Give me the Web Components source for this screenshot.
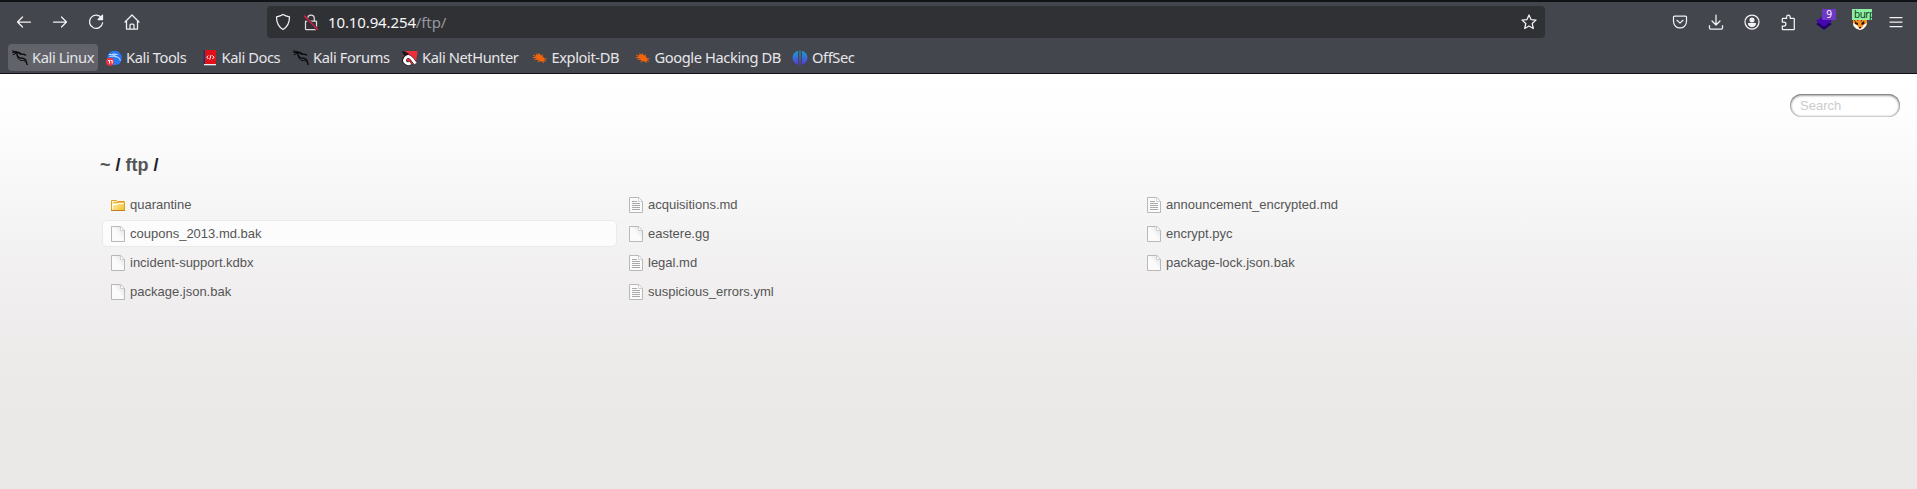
<!DOCTYPE html>
<html lang="en"><head><meta charset="utf-8"><title>listing directory /ftp/</title>
<style>html,body{margin:0;height:100%;overflow:hidden}</style></head><body>
<browser-window></browser-window>
<script>
const svg=(w,h,vb,b,extra='')=>`<svg width="${w}" height="${h}" viewBox="${vb}" fill="none" ${extra}>${b}</svg>`;
const line='stroke="#f2f2f4" stroke-width="1.25" stroke-linecap="round" stroke-linejoin="round"';
const dragon='<g stroke="#08090b" stroke-linejoin="round"><path stroke-width="1" d="M0 .8l4.500 1M.3 2.600l4.500-.5M.8 4.800l4-1.800"/><path stroke-width="1.700" d="M4 2.200c2.500.2 4 .8 5.200 2.200"/><path stroke-width="1.300" d="M9 4.200l3.500.2 1.500 1.200M5.200 3C4.600 5.800 5.800 7.400 8 7.900c2.500.5 5 .3 5.800 2.300.5 1.300.6 3 1.700 4.800"/><path stroke-width="1" d="M5.700 6.800c.5 2.700 2.500 4 4.800 3.700 1.300-.2 2.200.3 3 1.600"/></g>';
const bug='<g transform="translate(0 .5)"><ellipse cx="8" cy="7.500" rx="5" ry="3" transform="rotate(32 8 7.500)" fill="#f2640c"/><path stroke="#f2640c" stroke-width=".9" d="M4 6L1 4.500M4 7H.8M5 9l-3-.5M6 5L4 2.800M8 5L7 2.700M10 6l.5-2M12 8.500l2.500-.3M12 9.500l2 1.500M10.500 10.500l1 2M8 10l-2.500 1.500"/></g>';
const icons={
back:svg(16,16,'0 0 16 16','<path d="M6.500 3L1.500 8l5 5M1.500 8h13"/>',line),
forward:svg(16,16,'0 0 16 16','<path d="M9.500 3l5 5-5 5M14.500 8h-13"/>',line),
reload:svg(16,16,'0 0 16 16','<path d="M13.500 4A6.600 6.600 0 1 0 14.600 8.800"/><path d="M14.500 1.200v4.300h-4.300z" fill="#f2f2f4"/>',line),
home:svg(16,16,'0 0 16 16','<path d="M1 8l7-7 7 7M2.500 7v8h11V7M6 15v-4q0-1 1-1h2q1 0 1 1v4"/>',line),
shield:svg(16,18,'0 0 16 18','<path d="M8 1.500c2 1.300 4 1.900 6.500 2.300 0 5.400-1.300 9.800-6.500 12.700C2.800 13.600 1.500 9.200 1.500 3.800 4 3.400 6 2.800 8 1.500z"/>',line),
lock:svg(16,17,'0 0 16 17','<path stroke="#ddd" d="M4.700 7V4.500a3.300 3.300 0 0 1 6.600 0V7M3 7h10q.5 0 .5.500V15q0 .5-.5.500H3q-.5 0-.5-.5V7.500Q2.500 7 3 7"/><path stroke="#323236" stroke-width="3" d="M2 3l12 12"/><path stroke="#e51b4c" d="M1.500 2l13 13.500"/>',line),
star:svg(16,16,'0 0 16 16','<path d="M8 1l2 4.600 5 .5-3.800 3.400 1.100 5L8 12l-4.300 2.500 1.100-5L1 6.100l5-.5z"/>',line),
pocket:svg(16,16,'0 0 16 16','<path d="M2.500 2h11q1 0 1 1v4.200c0 9-13 9-13 0V3q0-1 1-1zM5 6.300l3 2.800 3-2.800"/>',line),
download:svg(16,16,'0 0 16 16','<path d="M8 1v9.500M4 7l4 4 4-4M1.500 11.500V14q0 1 1 1h11q1 0 1-1v-2.500"/>',line),
account:svg(16,16,'0 0 16 16','<circle cx="8" cy="8" r="7"/><circle cx="8" cy="6" r="1.900" fill="#f2f2f4"/><path fill="#f2f2f4" d="M4.500 9.700h7c-.5 2-1.700 2.800-3.500 2.800s-3-.8-3.500-2.800z"/>',line),
puzzle:svg(16,17,'0 0 16 17','<path d="M2.300 6V5q0-.7.700-.7h3.600V3a1.800 1.800 0 0 1 3.600 0v1.300h3.400q.7 0 .7.700v10q0 .7-.7.700H3q-.7 0-.7-.7v-3h1.600a1.900 1.900 0 0 0 0-4H2.300z"/>',line),
menu:svg(14,16,'0 0 14 16','<path d="M1 3.500h12M1 8h12M1 12.500h12"/>',line),
layers:svg(18,18,'0 0 18 18','<path fill="#21046b" d="M1 11l8-5 8 5-8 6z"/><path fill="#4607ac" d="M1 8l8-5.500L17 8l-8 5.500z"/>'),
fox:svg(16,16,'0 0 16 16','<path fill="#f7921e" d="M1 4l14-1v7l-3 4-4 2-4-2-3-4z"/><path fill="#fff" d="M1 9l3 1.500 3 3.500h3l2-3.500L15 9l-1 3-3 3-3 1-4-1.500L1.500 12z"/><path fill="#201611" d="M3 8l3 1v2l-3-1zM12 7l-2.500 2v2l3-1zM7 13h2v1.500H7z"/><path stroke="#893c10" d="M5 5l1 2M10 5l-1 3M2 6l2 2"/>'),
dragon:svg(16,16,'0 0 16 16',dragon),
tools:svg(16,16,'0 0 16 16','<circle cx="8.500" cy="8" r="7.300" fill="#2878f5"/><path d="M3 4.500c4 0 6 .5 7 2.200 3 .5 4 2 4.200 4M3.500 6.500c3-.6 5-.3 6.500.500M6.500 4l5 .5" stroke="#dceaff" stroke-width="1"/><circle cx="4" cy="11.800" r="4" fill="#ed3642"/><path stroke="#fff" d="M2 10.500h1.500v3M4.600 10.500h1.600v3"/>'),
docs:svg(16,16,'0 0 16 16','<path fill="#17346d" d="M1.500 0h2v14h-2z"/><path fill="#df1018" d="M3 0h11v14H3z"/><path fill="#eee" d="M2 14h12v1.300H2z"/><path stroke="#fff" d="M6.300 5.500L4.800 7.200 6.300 9M10.500 5.500L12 7.200 10.500 9M9.100 5L7.700 9.500"/>'),
hunter:svg(16,16,'0 0 16 16','<path fill="#f12e3c" d="M4 1h11.500L14 12.500 9 15 1 6z"/><path fill="#17171a" d="M0 1l4 1 3 2-4 3-2-3z"/><path stroke="#17171a" stroke-width="4" d="M13 13C10 9 7 4 3 8c-3 4 2 7 6 5"/><path stroke="#fff" stroke-width="2.800" d="M13.500 13.500C10 9 7 4 3.500 8c-3 4 2 7 5 5"/>'),
bug:svg(16,16,'0 0 16 16',bug),
offsec:svg(16,16,'0 0 16 16','<defs><linearGradient id="g" gradientUnits="userSpaceOnUse" x1="0" y1="0" x2="0" y2="16"><stop stop-color="#19a6ca"/><stop offset="1" stop-color="#5a2fe0"/></linearGradient></defs><path fill="url(#g)" d="M6 .8v13.800C-1.300 12.500 -1.300 3 6 .8zM10 .8v13.800c7.300-2.100 7.300-11.600 0-13.800zM7.400.5h1.200v15H7.400z"/>'),
folder:svg(16,16,'0 0 16 16','<defs><linearGradient id="f" x2="1" y2="1"><stop stop-color="#fffbd8"/><stop offset="1" stop-color="#f3bd20"/></linearGradient></defs><path fill="url(#f)" stroke="#dfa226" d="M1.500 3.500h5l1 1h7v9h-13z"/><path stroke="#fffbe5" d="M2.500 12.500v-5h5l1-1h5"/><path stroke="#ca7c20" d="M1 13.500h14"/><path stroke="#eab546" d="M3 5.500h10.500"/>'),
page:svg(16,16,'0 0 16 16','<defs><linearGradient id="p" x1="1" x2=".5" y2=".5"><stop stop-color="#ddd"/><stop offset="1" stop-color="#fbfbfb"/></linearGradient></defs><path fill="url(#p)" stroke="#b8b8b8" d="M1.500.5h9.200l3.800 3.800v11.200h-13z"/><path fill="#fff" stroke="#c6c6c6" stroke-width=".8" d="M10.500.8v3.700h3.700"/>'),
text:svg(16,16,'0 0 16 16','<path fill="#fbfbfb" stroke="#b8b8b8" d="M1.500.5h9.200l3.800 3.800v11.200h-13z"/><path fill="#fff" stroke="#c6c6c6" stroke-width=".8" d="M10.500.8v3.700h3.700"/><path stroke="#a9a9a9" d="M4 4.500h5M4 6.500h8M4 8.500h8M4 10.500h8M4 12.500h8"/>')
};
const def=(n,html)=>customElements.define(n,class extends HTMLElement{connectedCallback(){if(!this.shadowRoot)this.attachShadow({mode:'open'}).innerHTML=typeof html==='function'?html(this):html}});
def('ui-icon',e=>`<style>:host{display:block;flex:none}svg{display:block}</style>${icons[e.getAttribute('name')]}`);
def('tool-button',e=>`<style>:host{display:grid;place-items:center;width:36px;height:36px;flex:none;position:relative}</style><ui-icon name="${e.getAttribute('icon')}"></ui-icon><slot></slot>`);
def('book-mark',e=>`<style>:host{display:flex;align-items:center;gap:4px;height:27px;padding:0 4px;box-sizing:border-box;border-radius:4px;white-space:nowrap;width:${e.getAttribute('w')}px;flex:none}:host([active]){background:#62636a;width:90px;margin-right:4px}ui-icon{width:16px}span{position:relative;top:-1px}</style><ui-icon name="${e.getAttribute('icon')}"></ui-icon><span><slot></slot></span>`);
def('bookmark-strip',`<style>:host{display:flex;padding-left:8px;height:27px;margin-top:2px;letter-spacing:-.41px}</style><book-mark icon="dragon" w="90" active>Kali Linux</book-mark><book-mark icon="tools" w="95.5">Kali Tools</book-mark><book-mark icon="docs" w="91.5">Kali Docs</book-mark><book-mark icon="dragon" w="109">Kali Forums</book-mark><book-mark icon="hunter" w="129.5">Kali NetHunter</book-mark><book-mark icon="bug" w="103">Exploit-DB</book-mark><book-mark icon="bug" w="157.500">Google Hacking DB</book-mark><book-mark icon="offsec" w="76">OffSec</book-mark>`);
def('address-bar',`<style>:host{display:flex;align-items:center;width:1278px;height:32px;box-sizing:border-box;padding:0 8px;background:#303135;border-radius:4px;font-size:15px;letter-spacing:-.12px;color:#f6f6f7;flex:none}ui-icon+ui-icon{margin-left:12px}p{margin:0 auto 0 9px}i{font-style:normal;color:#97979d}</style><ui-icon name="shield"></ui-icon><ui-icon name="lock"></ui-icon><p>10.10.94.254<i>/ftp/</i></p><ui-icon name="star"></ui-icon>`);
def('browser-chrome',`<style>:host{display:block;height:74px;box-sizing:border-box;background:#44464e;border-top:2px solid #111216;border-bottom:1px solid #111216;color:#e6e6e9;font:14.700px "Noto Sans",sans-serif}nav{display:flex;align-items:center;height:40px;box-sizing:border-box;padding:0 4px 0 6px}address-bar{margin-left:117px;margin-right:117px}.n,.u{position:absolute;top:5px;height:11px;line-height:11px;box-sizing:border-box}.n{left:16px;width:14px;background:#6c38c4;border-radius:1px;font-size:10px;text-align:center;color:#fff}.u{left:10px;width:20px;background:#8cf0a2;color:#143821;font-size:10px;letter-spacing:-.5px;overflow:hidden;padding-left:2px}</style>
<nav><tool-button icon="back"></tool-button><tool-button icon="forward"></tool-button><tool-button icon="reload"></tool-button><tool-button icon="home"></tool-button><address-bar></address-bar><tool-button icon="pocket"></tool-button><tool-button icon="download"></tool-button><tool-button icon="account"></tool-button><tool-button icon="puzzle"></tool-button><tool-button icon="layers"><span class="n">9</span></tool-button><tool-button icon="fox"><span class="u">burp</span></tool-button><tool-button icon="menu"></tool-button></nav><bookmark-strip></bookmark-strip>`);
def('file-item',e=>`<style>:host{display:flex;align-items:center;gap:4px;height:27px;box-sizing:border-box;padding-left:7px;border:1px solid transparent;border-radius:5px;color:#555;margin:1px}:host([active]){background:#fcfcfc;border-color:#eaeaea}</style><ui-icon name="${e.getAttribute('icon')}"></ui-icon><span><slot></slot></span>`);
def('search-box',`<style>:host{display:block;width:110px;height:23px;box-sizing:border-box;padding-left:10px;border-radius:12px;background:#fff;box-shadow:inset 0 0 3px rgba(0,0,0,.35),inset 0 1px 3px rgba(0,0,0,.6);font:13px/23px "Liberation Sans",sans-serif;color:#ccc}</style><slot></slot>`);
def('directory-page',`<style>:host{display:block;flex:1;min-height:0;box-sizing:border-box;padding:20px 17px 0 100px;background:linear-gradient(#fff 0,#fefefe 35px,#f6f6f6 130px,#f1eff0 205px,#ecebea 285px,#eae9e7 350px);font:13px "Liberation Sans",sans-serif}search-box{margin-left:auto}h1{font-size:18px;line-height:20px;margin:38px 0 15px;color:#222}h1 span{color:#555}section{display:grid;grid-template-columns:repeat(3,518px);margin-left:1px}file-item{width:515px}</style>
<search-box>Search</search-box><h1><span>~</span> / <span>ftp</span> /</h1><section><file-item icon="folder">quarantine</file-item><file-item icon="text">acquisitions.md</file-item><file-item icon="text">announcement_encrypted.md</file-item><file-item active icon="page">coupons_2013.md.bak</file-item><file-item icon="page">eastere.gg</file-item><file-item icon="page">encrypt.pyc</file-item><file-item icon="page">incident-support.kdbx</file-item><file-item icon="text">legal.md</file-item><file-item icon="page">package-lock.json.bak</file-item><file-item icon="page">package.json.bak</file-item><file-item icon="text">suspicious_errors.yml</file-item></section>`);
def('browser-window','<style>:host{display:flex;flex-direction:column;height:100%}</style><browser-chrome></browser-chrome><directory-page></directory-page>');
</script></body></html>
